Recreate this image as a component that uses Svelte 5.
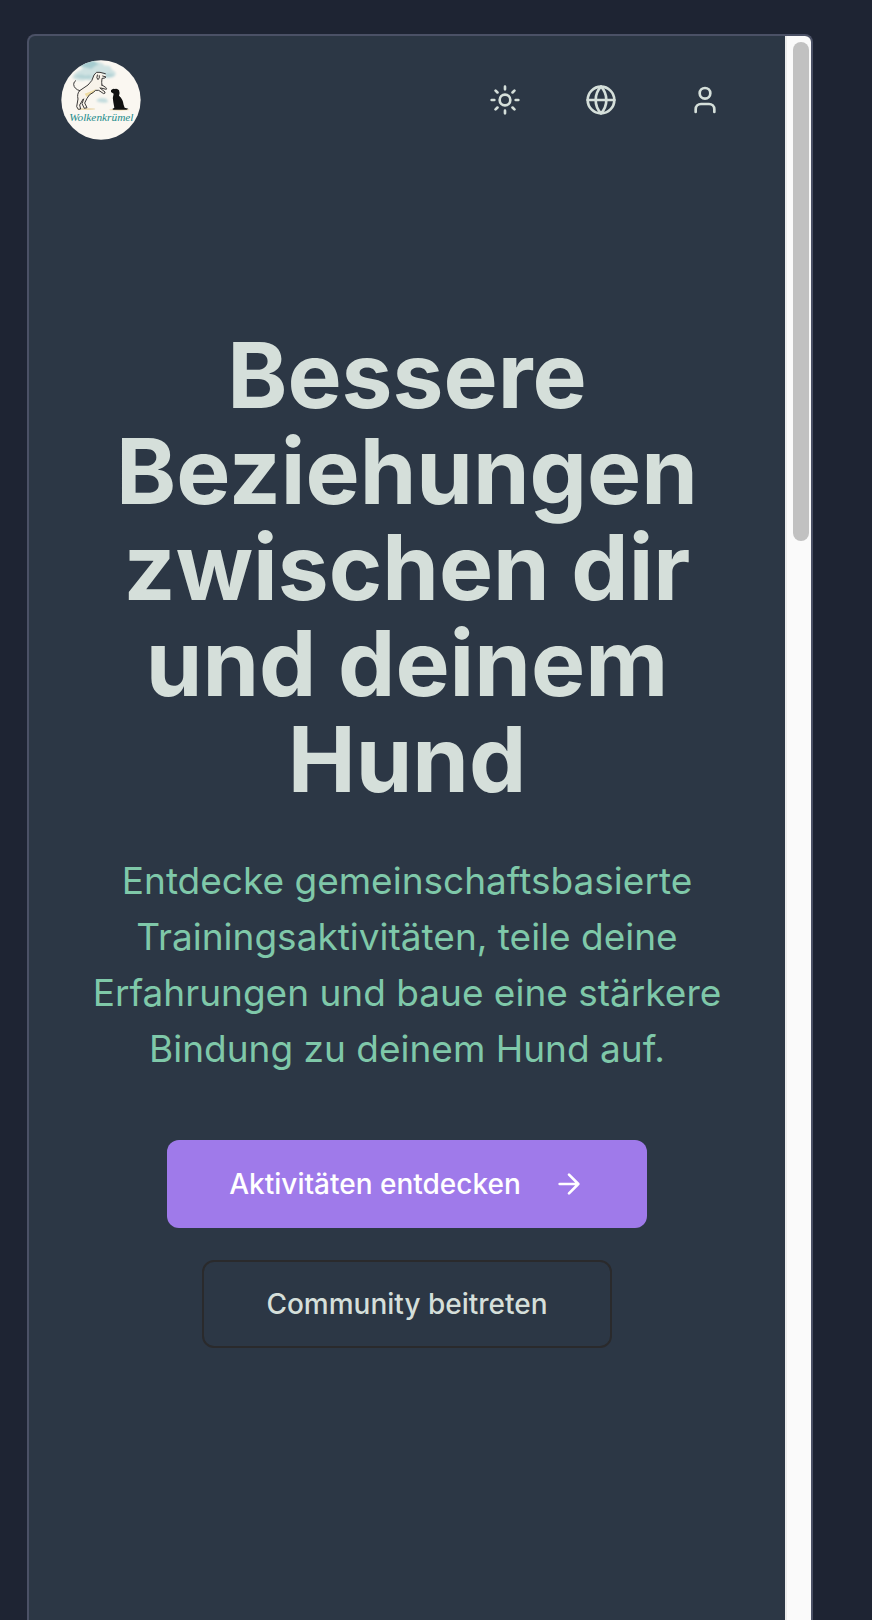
<script>
  const headline = 'Bessere Beziehungen zwischen dir und deinem Hund';
  const intro =
    'Entdecke gemeinschaftsbasierte Trainingsaktivitäten, teile deine Erfahrungen und baue eine stärkere Bindung zu deinem Hund auf.';
</script>

<div class="backdrop">
  <div class="frame">
    <div class="page">
      <header>
        <a class="logo" href="#start" aria-label="Wolkenkrümel">
          <svg viewBox="33 31 240 240" aria-hidden="true">
            <defs>
              <filter id="soft" x="-20%" y="-20%" width="140%" height="140%">
                <feGaussianBlur stdDeviation="3" />
              </filter>
              <clipPath id="disc"><circle cx="153" cy="151" r="119" /></clipPath>
            </defs>
            <circle cx="153" cy="151" r="119" fill="#faf7f1" />
            <g clip-path="url(#disc)">
              <g filter="url(#soft)">
                <path fill="#cfe2e2" d="M66 84 Q74 66 94 60 Q104 40 126 42 Q150 30 164 48 Q182 44 186 60 Q204 68 194 80 Q180 88 164 82 Q130 98 110 90 Q88 98 66 84Z" />
                <path fill="#a6ccd0" d="M88 50 Q104 32 130 32 L146 44 Q130 50 124 58 Q104 52 88 50Z" />
                <path fill="#b4d3d6" d="M72 80 Q90 70 106 78 Q120 72 128 82 Q112 94 72 80Z" />
                <path fill="#b4d3d6" d="M162 76 Q176 66 194 76 Q184 86 162 82Z" />
                <path fill="#c3dcde" d="M138 154 Q148 142 158 146 Q172 144 174 158 Q156 162 138 154Z" />
              </g>
              <ellipse cx="108" cy="178" rx="28" ry="3" fill="#ecdcb6" />
              <ellipse cx="208" cy="180" rx="30" ry="3" fill="#ecdcb6" />
              <path d="M84 178 L80 172 L84 148 Q80 132 90 124 L114 106 Q128 94 132 76 Q136 66 148 67 L168 77 Q168 83 158 84 L154 96 Q152 106 156 110 L168 114 L170 119 L154 117 L166 128 L164 132 L148 122 Q138 120 132 128 Q120 132 112 144 L104 160 L110 176 L102 176 L97 160 L99 148 L90 162 L91 178Z" fill="#f8f3ea" />
              <path d="M104 132 Q124 126 138 118 L130 130 Q116 134 110 142Z" fill="#f0dda4" />
              <g fill="none" stroke="#3a3838" stroke-width="3" stroke-linecap="round" stroke-linejoin="round">
                <path d="M89 123 Q72 118 71 104 Q71 96 77 93" />
                <path d="M89 123 L114 106 Q128 94 132 76 Q138 64 150 68 L166 72 M158 79 L168 82 Q164 87 156 86 Q154 98 156 108" />
                <path d="M142 76 Q138 86 144 90 Q150 86 148 78" />
                <path d="M156 106 L167 113 Q171 116 169 119 L152 115 M150 115 L165 127 Q166 132 161 132 L146 122 Q136 119 130 128 Q116 134 111 146 L104 160 L111 174 L103 176 L96 162 L101 148" />
                <path d="M89 123 Q80 132 84 148 L80 171 L85 179 L92 178 L89 166 L99 149" />
              </g>
              <path d="M183 122 Q188 116 194 118 Q202 115 207 122 Q211 132 207 138 Q219 148 221 166 L224 174 L235 177 L230 180 L190 180 L187 178 L193 174 L190 158 Q186 146 191 132 L183 127Z" fill="#111" />
            </g>
            <text x="154" y="215" text-anchor="middle" class="wordmark">Wolkenkrümel</text>
          </svg>
        </a>

        <nav aria-label="Einstellungen">
          <button type="button" class="icon-button" aria-label="Farbschema wechseln">
            <svg class="icon" viewBox="0 0 24 24" aria-hidden="true">
              <circle cx="12" cy="12" r="4" />
              <path d="M12 2v2M12 20v2M4.93 4.93l1.41 1.41M17.66 17.66l1.41 1.41M2 12h2M20 12h2M6.34 17.66l-1.41 1.41M19.07 4.93l-1.41 1.41" />
            </svg>
          </button>
          <button type="button" class="icon-button" aria-label="Sprache wählen">
            <svg class="icon" viewBox="0 0 24 24" aria-hidden="true">
              <circle cx="12" cy="12" r="10" />
              <path d="M12 2a14.5 14.5 0 0 0 0 20 14.5 14.5 0 0 0 0-20M2 12h20" />
            </svg>
          </button>
          <button type="button" class="icon-button account" aria-label="Konto">
            <svg class="icon" viewBox="0 0 24 24" aria-hidden="true">
              <path d="M19 21v-2a4 4 0 0 0-4-4H9a4 4 0 0 0-4 4v2" />
              <circle cx="12" cy="7" r="4" />
            </svg>
          </button>
        </nav>
      </header>

      <main>
        <h1>{headline}</h1>
        <p>{intro}</p>
        <div class="actions">
          <button type="button" class="action primary">
            Aktivitäten entdecken
            <svg class="icon" viewBox="0 0 24 24" aria-hidden="true">
              <path d="M5 12h14M12 5l7 7-7 7" />
            </svg>
          </button>
          <button type="button" class="action outline">Community beitreten</button>
        </div>
      </main>
    </div>

    <div class="scroll-track" aria-hidden="true">
      <div class="scroll-thumb"></div>
    </div>
  </div>
</div>

<style>
  :global(body) {
    background: #1e2433;
  }

  .backdrop {
    box-sizing: border-box;
    min-height: 100vh;
    display: flex;
    padding: 34px 59px 0 27px;
    background: #1e2433;
    font-family: Inter, 'Liberation Sans', sans-serif;
  }

  .frame {
    flex: 1;
    min-width: 0;
    display: flex;
    overflow: hidden;
    border: 2px solid #4b5166;
    border-bottom: 0;
    border-radius: 8px 8px 0 0;
    background: #2c3745;
  }

  .page {
    flex: 1;
    min-width: 0;
    color: #d5dfda;
  }

  header {
    display: flex;
    align-items: center;
    justify-content: space-between;
    padding: 24px 32px;
  }

  .logo,
  .logo svg {
    display: block;
    width: 80px;
    height: 80px;
  }

  .wordmark {
    font: italic 400 34px 'Liberation Serif', serif;
    fill: #258c8c;
  }

  nav {
    display: flex;
    gap: 16px;
  }

  button {
    box-sizing: border-box;
    margin: 0;
    border: 0;
    background: none;
    color: inherit;
    font-family: inherit;
    cursor: pointer;
  }

  .icon-button {
    display: grid;
    place-items: center;
    width: 80px;
    height: 80px;
    padding: 0;
  }

  .account {
    width: 96px;
  }

  .icon {
    width: 32px;
    height: 32px;
    fill: none;
    stroke: currentColor;
    stroke-width: 2;
    stroke-linecap: round;
    stroke-linejoin: round;
  }

  main {
    padding: 163px 56px 192px;
    text-align: center;
  }

  h1 {
    margin: 0;
    font-size: 91px;
    line-height: 96px;
    font-weight: 700;
  }

  p {
    margin: 46px 0 0;
    color: #7fc8a9;
    font-size: 37px;
    line-height: 56px;
  }

  .actions {
    display: flex;
    flex-direction: column;
    align-items: center;
    gap: 32px;
    margin-top: 63px;
  }

  .action {
    display: flex;
    align-items: center;
    gap: 32px;
    height: 88px;
    padding: 0 62px;
    border-radius: 12px;
    font-size: 28px;
    font-weight: 500;
    white-space: nowrap;
  }

  .primary {
    background: #9f7aea;
    color: #fff;
  }

  .outline {
    border: 2px solid #2a2a2c;
  }

  .scroll-track {
    box-sizing: border-box;
    width: 26px;
    padding: 6px;
    border-left: 2px solid #ebebeb;
    background: #fafafa;
  }

  .scroll-thumb {
    width: 16px;
    height: 499px;
    border-radius: 8px;
    background: #c1c1c1;
  }
</style>
